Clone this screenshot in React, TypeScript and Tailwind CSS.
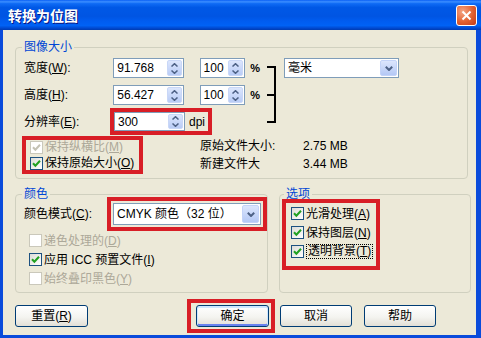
import React from "react";

// XP-style "转换为位图" dialog, with the red annotation boxes from the screenshot.

const RED = "border-[4px] border-[#D81E26]";

function Chevron({ up }: { up?: boolean }) {
  return (
    <svg width="7" height="4" viewBox="0 0 7 4">
      <path
        d={up ? "M0.5 3.5 L3.5 0.7 L6.5 3.5" : "M0.5 0.5 L3.5 3.3 L6.5 0.5"}
        fill="none"
        stroke="#4D6185"
        strokeWidth="1.5"
      />
    </svg>
  );
}

function Spin({ value, className }: { value: string; className: string }) {
  return (
    <div className={`flex items-center border border-[#7F9DB9] bg-white ${className}`}>
      <span className="flex-1 pl-[3px] leading-none">{value}</span>
      <div className="mr-[1px] flex h-[calc(100%-2px)] w-[15px] flex-col items-center justify-center gap-[3px] rounded-[2px] border border-[#C9D7F7] bg-[linear-gradient(#DCE6FD,#B9CCF6)]">
        <Chevron up />
        <Chevron />
      </div>
    </div>
  );
}

function Combo({ value, className }: { value: string; className: string }) {
  return (
    <div className={`flex items-center border border-[#7F9DB9] bg-white ${className}`}>
      <span className="flex-1 pl-[3px] leading-none">{value}</span>
      <div className="mr-[1px] flex h-[calc(100%-2px)] w-[17px] items-center justify-center rounded-[2px] border border-[#C3D3F8] bg-[linear-gradient(#DCE6FD,#B4C8F5)]">
        <svg width="8" height="5" viewBox="0 0 8 5">
          <path d="M0.8 0.8 L4 4 L7.2 0.8" fill="none" stroke="#4D6185" strokeWidth="2" />
        </svg>
      </div>
    </div>
  );
}

function Box({ checked, disabled }: { checked?: boolean; disabled?: boolean }) {
  return (
    <div
      className={`flex h-[13px] w-[13px] shrink-0 items-center justify-center border ${
        disabled ? "border-[#CAC8BB] bg-white" : "border-[#1C5180] bg-[linear-gradient(135deg,#DCDCD7,#FFFFFF)]"
      }`}
    >
      {checked && (
        <svg width="9" height="9" viewBox="0 0 9 9">
          <path
            d="M1 4.2 L3.4 6.8 L8 1.8"
            fill="none"
            stroke={disabled ? "#C4C2B4" : "#21A121"}
            strokeWidth="2"
          />
        </svg>
      )}
    </div>
  );
}

function CheckRow({
  label,
  k,
  checked,
  disabled,
  focus,
  className = "",
}: {
  label: string;
  k: string;
  checked?: boolean;
  disabled?: boolean;
  focus?: boolean;
  className?: string;
}) {
  return (
    <div className={`flex items-center gap-[2px] ${disabled ? "text-[#ACA899]" : ""} ${className}`}>
      <Box checked={checked} disabled={disabled} />
      <span className={focus ? "border border-dotted border-black px-[1px] leading-[13px]" : ""}>
        {label}(<span className="underline">{k}</span>)
      </span>
    </div>
  );
}

function Btn({ children, def, className = "" }: { children: React.ReactNode; def?: boolean; className?: string }) {
  return (
    <div
      className={`flex h-[22px] shrink-0 items-center justify-center rounded-[3px] border border-[#003C74] bg-[linear-gradient(#FFFFFF,#F4F4F0_55%,#E2DFD6)] ${
        def ? "shadow-[inset_0_1px_0_1px_#CEE7FF,inset_0_-1px_0_1px_#6982EE]" : ""
      } ${className}`}
    >
      {children}
    </div>
  );
}

export default function App() {
  return (
    <div className="flex h-[338px] w-[481px] flex-col overflow-hidden bg-[#0A4BDB] font-[family-name:'Liberation_Sans','Noto_Sans_CJK_SC',sans-serif] text-[12px] leading-[14px] text-black">
      {/* Title bar */}
      <div className="flex h-[30px] shrink-0 items-center bg-[linear-gradient(180deg,#0A5FF5_0%,#3B8EFF_6%,#0F6BF5_12%,#0058E6_25%,#0055E3_55%,#005CF0_70%,#0062F5_85%,#0048CF_94%,#003BB0_100%)] pl-[8px] pr-[4px]">
        <span className="flex-1 font-[family-name:'Noto_Sans_CJK_SC',sans-serif] text-[14px] font-bold text-white [text-shadow:1px_1px_0_#0A1883]">
          转换为位图
        </span>
        <div className="flex h-[21px] w-[21px] items-center justify-center rounded-[3px] border border-white bg-[radial-gradient(circle_at_30%_30%,#F4A585,#E2602F_55%,#C23B1A)]">
          <svg width="11" height="11" viewBox="0 0 11 11">
            <path d="M1.5 1.5 L9.5 9.5 M9.5 1.5 L1.5 9.5" stroke="white" strokeWidth="2" />
          </svg>
        </div>
      </div>

      {/* Client area */}
      <div className="mb-[3px] ml-[3px] mr-[5px] flex flex-1 flex-col bg-[#ECE9D8]">
        {/* 图像大小 */}
        <fieldset className="ml-[12px] mt-[10px] w-[453px] rounded-[4px] border border-[#D0D0BF] pb-[4px]">
          <legend className="ml-[6px] px-[2px] text-[#0046D5]">图像大小</legend>
          <div className="flex flex-col pl-[8px] pt-[4px]">
            <div className="flex items-start">
              <div className="flex w-[236px] flex-col">
                <div className="flex h-[20px] items-center">
                  <span className="w-[90px]">
                    宽度(<span className="underline">W</span>):
                  </span>
                  <Spin value="91.768" className="h-[20px] w-[71px]" />
                  <Spin value="100" className="ml-[16px] h-[20px] w-[46px]" />
                  <span className="ml-[5px] text-[11px] font-bold">%</span>
                </div>
                <div className="mt-[7px] flex h-[20px] items-center">
                  <span className="w-[90px]">
                    高度(<span className="underline">H</span>):
                  </span>
                  <Spin value="56.427" className="h-[20px] w-[71px]" />
                  <Spin value="100" className="ml-[16px] h-[20px] w-[46px]" />
                  <span className="ml-[5px] text-[11px] font-bold">%</span>
                </div>
                <div className="mt-[3px] flex items-center">
                  <span className="w-[86px]">
                    分辨率(<span className="underline">E</span>):
                  </span>
                  <div className={`flex items-center pr-[3px] ${RED}`}>
                    <Spin value="300" className="h-[19px] w-[71px]" />
                    <span className="ml-[4px]">dpi</span>
                  </div>
                </div>
              </div>
              {/* link bracket */}
              <div className="ml-[7px] mt-[8px] flex h-[57px] w-[9px] items-center border-y-2 border-r-2 border-black">
                <div className="h-[2px] w-full bg-black" />
              </div>
              <Combo value="毫米" className="ml-[8px] h-[20px] w-[115px]" />
            </div>

            <div className="mt-[1px] flex">
              <div className={`-ml-[2px] flex w-[121px] flex-col gap-[2px] pl-[4px] ${RED}`}>
                <CheckRow label="保持纵横比" k="M" checked disabled className="h-[14px]" />
                <CheckRow label="保持原始大小" k="O" checked className="h-[14px]" />
              </div>
              <div className="ml-[57px] flex flex-col gap-[4px] pt-[3px]">
                <div className="flex h-[14px] items-center">
                  <span className="w-[103px]">原始文件大小:</span>
                  <span>2.75 MB</span>
                </div>
                <div className="flex h-[14px] items-center">
                  <span className="w-[103px]">新建文件大</span>
                  <span>3.44 MB</span>
                </div>
              </div>
            </div>
          </div>
        </fieldset>

        <div className="ml-[12px] mt-[8px] flex gap-[11px]">
          {/* 颜色 */}
          <fieldset className="w-[250px] rounded-[4px] border border-[#D0D0BF] pb-[4px]">
            <legend className="ml-[6px] px-[2px] text-[#0046D5]">颜色</legend>
            <div className="flex flex-col pl-[8px]">
              <div className="-mt-[4px] flex items-center">
                <span className="w-[83px] shrink-0">
                  颜色模式(<span className="underline">C</span>):
                </span>
                <div className={`flex w-[160px] shrink-0 p-[2px] ${RED}`}>
                  <Combo value="CMYK 颜色（32 位）" className="h-[22px] flex-1" />
                </div>
              </div>
              <CheckRow label="递色处理的" k="D" disabled className="ml-[5px] h-[19px]" />
              <CheckRow label="应用 ICC 预置文件" k="I" checked className="ml-[5px] h-[19px]" />
              <CheckRow label="始终叠印黑色" k="Y" disabled className="ml-[5px] h-[19px]" />
            </div>
          </fieldset>

          {/* 选项 */}
          <fieldset className="w-[192px] rounded-[4px] border border-[#D0D0BF]">
            <legend className="ml-[4px] px-[2px] text-[#0046D5]">选项</legend>
            <div className={`-mt-[2px] ml-[2px] flex w-[98px] flex-col pb-[5px] pl-[5px] pt-[1px] ${RED}`}>
              <CheckRow label="光滑处理" k="A" checked className="h-[19px]" />
              <CheckRow label="保持图层" k="N" checked className="h-[19px]" />
              <CheckRow label="透明背景" k="T" checked focus className="h-[19px]" />
            </div>
          </fieldset>
        </div>

        {/* Buttons */}
        <div className="ml-[12px] mt-[6px] flex items-center">
          <Btn className="w-[73px]">
            重置(<span className="underline">R</span>)
          </Btn>
          <div className={`ml-[99px] flex h-[34px] w-[88px] items-center pl-[5px] ${RED}`}>
            <Btn def className="w-[73px]">
              确定
            </Btn>
          </div>
          <Btn className="ml-[5px] w-[72px]">取消</Btn>
          <Btn className="ml-[12px] w-[72px]">帮助</Btn>
        </div>
      </div>
    </div>
  );
}
